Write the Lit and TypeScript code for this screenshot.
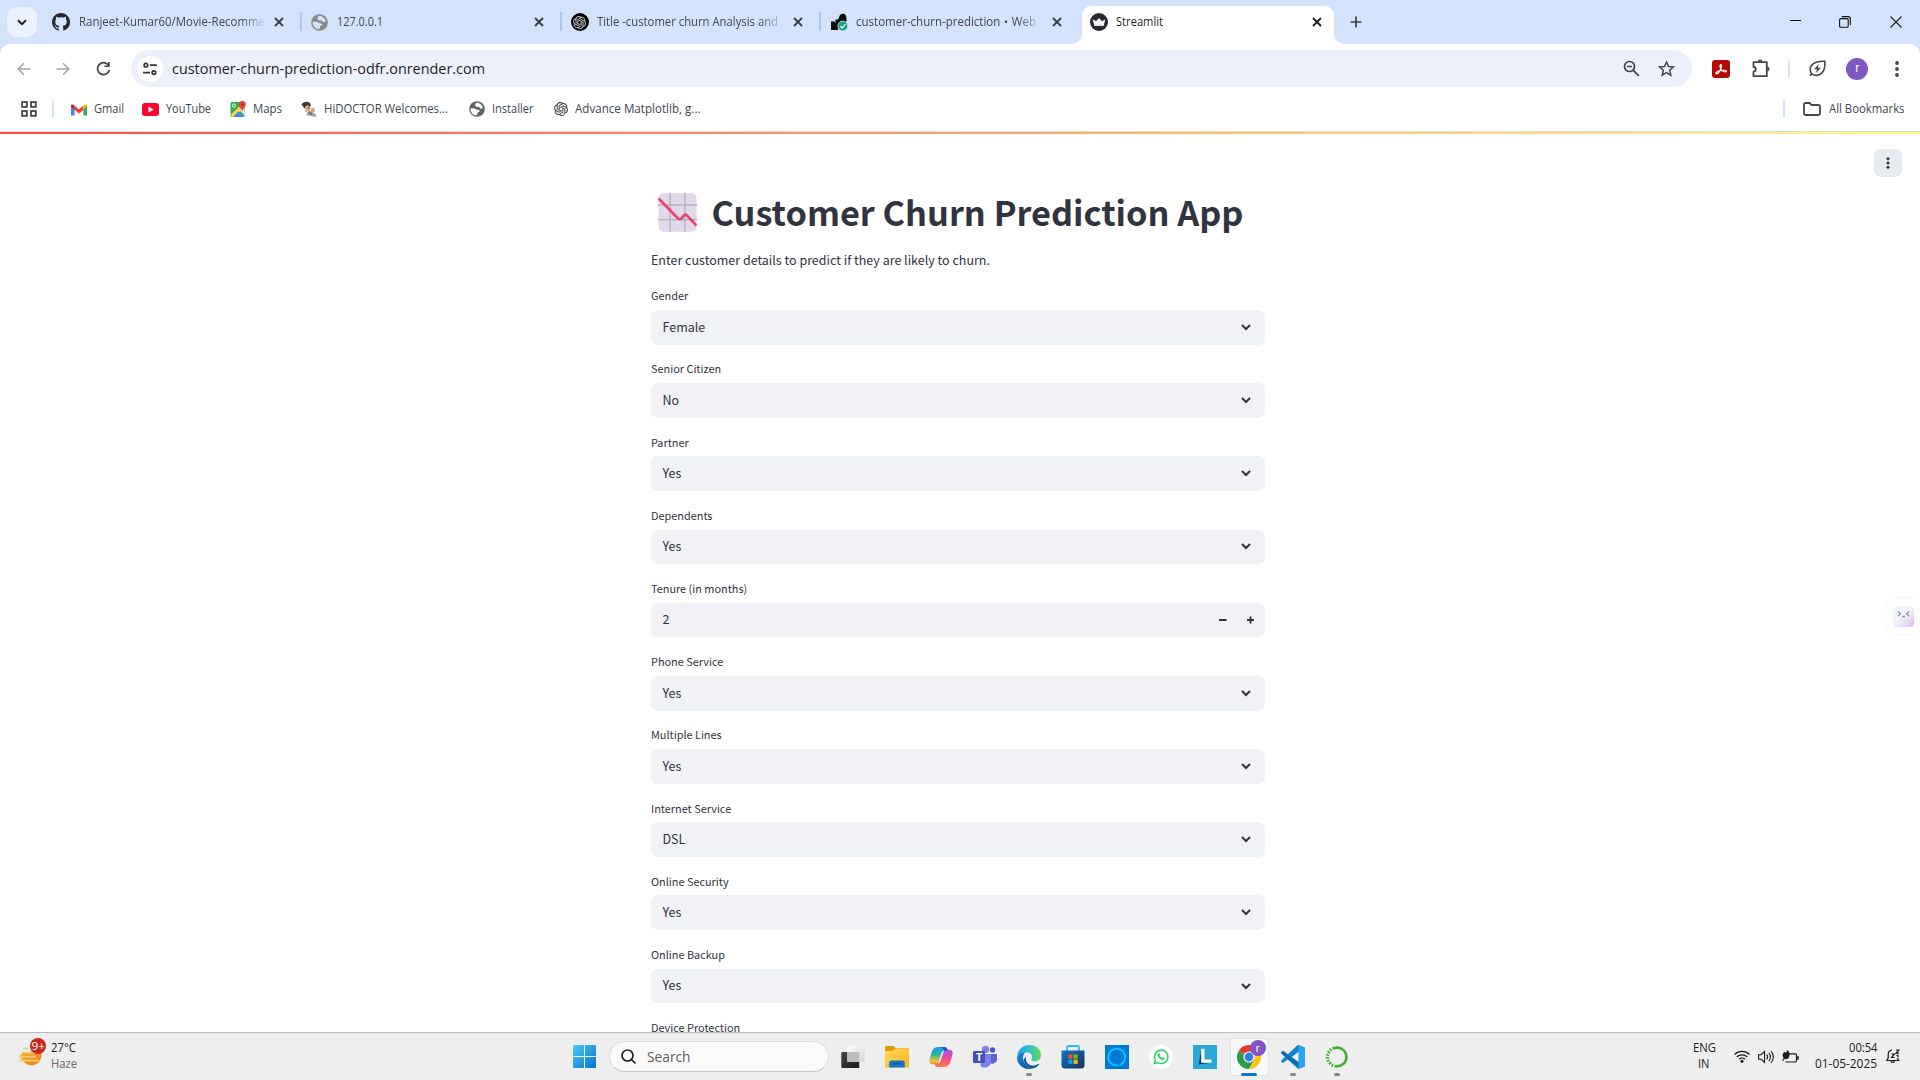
import { LitElement, html, svg, css, nothing } from "lit";
import { customElement } from "lit/decorators.js";

/** One line of interface text drawn to an exact advance width. */
const line = (text: string, width: number, cls = "ui") => html`
  <svg class="line ${cls}" width=${width} height="20" viewBox="0 0 ${width} 20">
    <text x="0" y="14" textLength=${width} lengthAdjust="spacingAndGlyphs">${text}</text>
  </svg>`;

const icon = (w: number, h: number, box: string, body: unknown, cls = "") =>
  html`<svg class="icon ${cls}" width=${w} height=${h} viewBox=${box}>${body}</svg>`;

const cross = (cls = "") =>
  icon(10, 10, "0 0 10 10", svg`<path d="M1 1l8 8M9 1L1 9" fill="none" stroke="currentColor" stroke-width="1.9"/>`, cls);

const globe = (size: number, color: string, bg: string) => icon(size, size, "0 0 18 18", svg`
  <circle cx="9" cy="9" r="8.8" fill=${color}/>
  <path d="M1.8 8.2l4.6.1 2.6 1.6 2.6.3.2 1.5-2.2 1.4-.3 2.2-1.5.9A7 7 0 0 1 1.8 8.2z" fill=${bg}/>
  <path d="M7.2 3.2c.6-1 2-1.300 3.400-1.100l3.200 2 1.700 3-.9 1.600-2.200-.4-1-1.700-2.500.2-2-1.400z" fill=${bg}/>`);

const knot = (size: number, color: string) => icon(size, size, "0 0 24 24", svg`
  <path fill=${color} stroke=${color} stroke-width=".3" d="M22.2819 9.8211a5.9847 5.9847 0 0 0-.5157-4.9108 6.0462 6.0462 0 0 0-6.5098-2.9A6.0651 6.0651 0 0 0 4.9807 4.1818a5.9847 5.9847 0 0 0-3.9977 2.9 6.0462 6.0462 0 0 0 .7427 7.0966 5.98 5.98 0 0 0 .511 4.9107 6.051 6.051 0 0 0 6.5146 2.9001A5.9847 5.9847 0 0 0 13.2599 24a6.0557 6.0557 0 0 0 5.7718-4.2058 5.9894 5.9894 0 0 0 3.9977-2.9001 6.0557 6.0557 0 0 0-.7475-7.0729zm-9.022 12.6081a4.4755 4.4755 0 0 1-2.8764-1.0408l.1419-.0804 4.7783-2.7582a.7948.7948 0 0 0 .3927-.6813v-6.7369l2.02 1.1686a.071.071 0 0 1 .038.052v5.5826a4.504 4.504 0 0 1-4.4945 4.4944zm-9.6607-4.1254a4.4708 4.4708 0 0 1-.5346-3.0137l.142.0852 4.783 2.7582a.7712.7712 0 0 0 .7806 0l5.8428-3.3685v2.3324a.0804.0804 0 0 1-.0332.0615L9.74 19.9502a4.4992 4.4992 0 0 1-6.1408-1.6464zM2.3408 7.8956a4.485 4.485 0 0 1 2.3655-1.9728V11.6a.7664.7664 0 0 0 .3879.6765l5.8144 3.3543-2.0201 1.1685a.0757.0757 0 0 1-.071 0l-4.8303-2.7865A4.504 4.504 0 0 1 2.3408 7.872zm16.5963 3.8558L13.1038 8.364 15.1192 7.2a.0757.0757 0 0 1 .071 0l4.8303 2.7913a4.4944 4.4944 0 0 1-.6765 8.1042v-5.6772a.79.79 0 0 0-.407-.667zm2.0107-3.0231l-.142-.0852-4.7735-2.7818a.7759.7759 0 0 0-.7854 0L9.409 9.2297V6.8974a.0662.0662 0 0 1 .0284-.0615l4.8303-2.7866a4.4992 4.4992 0 0 1 6.6802 4.66zM8.3065 12.863l-2.02-1.1638a.0804.0804 0 0 1-.038-.0567V6.0742a4.4992 4.4992 0 0 1 7.3757-3.4537l-.142.0805L8.704 5.459a.7948.7948 0 0 0-.3927.6813zm1.0976-2.3654l2.602-1.4998 2.6069 1.4998v2.9994l-2.5974 1.4997-2.6067-1.4997Z"/>`);

const github = icon(18, 18, "0 0 16 16", svg`<path fill="#24292f" d="M8 0C3.58 0 0 3.58 0 8c0 3.54 2.29 6.53 5.47 7.59.4.07.55-.17.55-.38 0-.19-.01-.82-.01-1.49-2.01.37-2.53-.49-2.69-.94-.09-.23-.48-.94-.82-1.13-.28-.15-.68-.52-.01-.53.63-.01 1.08.58 1.23.82.72 1.21 1.87.87 2.33.66.07-.52.28-.87.51-1.07-1.78-.2-3.64-.89-3.64-3.95 0-.87.31-1.59.82-2.15-.08-.2-.36-1.02.08-2.12 0 0 .67-.21 2.2.82.64-.18 1.32-.27 2-.27s1.36.09 2 .27c1.53-1.04 2.2-.82 2.2-.82.44 1.1.16 1.92.08 2.12.51.56.82 1.27.82 2.15 0 3.07-1.87 3.75-3.65 3.95.29.25.54.73.54 1.48 0 1.07-.01 1.93-.01 2.2 0 .21.15.46.55.38A8.01 8.01 0 0 0 16 8c0-4.42-3.58-8-8-8z"/>`);

const gpt = html`<span class="gpt">${knot(13, "#c4c4c4")}</span>`;

const render = icon(18, 18, "0 0 18 18", svg`
  <path fill="#0b0b0b" d="M13.2.8c-2.400 0-3.900 1.600-4.200 3.600-.2 1.500-1.300 2.200-2.900 2.200C3.200 6.600 1 8.800 1 11.500V17h7.200v-4.700h3.200c3.300-.2 5.300-2.700 5.200-5.900C16.500 3.200 15.600.8 13.200.8z"/>
  <path d="M.5 6h5v4h-5z" fill="#d3e3fd"/><path d="M1 8.500h4V12H1z" fill="#0b0b0b"/>
  <circle cx="12.800" cy="13" r="4.900" fill="#12a37f" stroke="#d3e3fd" stroke-width=".8"/>
  <path d="M10.400 13.200l1.800 1.800 3.200-3.800" fill="none" stroke="#fff" stroke-width="1.300"/>`);

const crown = icon(18, 18, "0 0 18 18", svg`
  <circle cx="9" cy="9" r="9" fill="#262730"/>
  <path d="M2.700 6.300l3.200 1.900L9 4.900l3.100 3.300 3.200-1.900-1.700 6.700H4.400z" fill="#fff"/>
  <path d="M5 11.200h8l-.5 1.800h-7z" fill="#ddd"/>`);

interface Tab { icon: unknown; title: string; width: number; clipped?: boolean }

const tabs: Tab[] = [
  { icon: github, title: "Ranjeet-Kumar60/Movie-Recomme", width: 186, clipped: true },
  { icon: globe(17, "#8a8a8a", "#d3e3fd"), title: "127.0.0.1", width: 46 },
  { icon: gpt, title: "Title -customer churn Analysis and", width: 181, clipped: true },
  { icon: render, title: "customer-churn-prediction・Web", width: 180, clipped: true },
];

@customElement("browser-tabs")
class BrowserTabs extends LitElement {
  static styles = css`
    :host { display: flex; height: 44px; background: #d3e3fd; color: #3c4043; align-items: stretch; }
    svg { display: block; flex: none; }
    .line { overflow: visible; }
    .ui { font: 11.7px "Open Sans", "Noto Sans CJK JP", sans-serif; fill: #41474d; }
    .search { width: 30px; height: 30px; margin: 7px 4px 0 7px; border-radius: 10px; background: #ebf2ff; display: grid; place-items: center; flex: none; }
    .tab { box-sizing: border-box; width: 259.300px; padding: 0 16px 0 11px; display: flex; align-items: center; height: 44px; flex: none; }
    .tab + .tab { background: linear-gradient(#a8c7fa, #a8c7fa) no-repeat 0 12px / 2px 19px; }
    .title { flex: 1; margin: 0 8px 0 8.500px; height: 20px; min-width: 0; }
    .clipped { -webkit-mask-image: linear-gradient(90deg, #000 162px, transparent 188px); mask-image: linear-gradient(90deg, #000 162px, transparent 188px); }
    .gpt { width: 18px; height: 18px; border-radius: 50%; background: #050505; display: grid; place-items: center; flex: none; }
    .active { position: relative; box-sizing: border-box; width: 252px; margin: 6px 0 0 4.300px; padding: 0 12.500px 6px 7.500px; border-radius: 9px 9px 0 0; background: #fff; display: flex; align-items: center; flex: none; color: #1f1f1f; }
    .active .ui { fill: #1f1f1f; }
    .active::before, .active::after { content: ""; position: absolute; bottom: 0; width: 10px; height: 10px; }
    .active::before { left: -10px; background: radial-gradient(circle at 0 0, transparent 9.500px, #fff 10px); }
    .active::after { right: -10px; background: radial-gradient(circle at 100% 0, transparent 9.500px, #fff 10px); }
    .plus { margin: 16px 0 0 16px; }
    .win { margin-left: auto; padding: 0 18.500px 0 0; display: flex; gap: 38.500px; height: 43px; align-items: center; }
  `;
  render() {
    return html`
      <div class="search">${icon(10, 7, "0 0 10 7", svg`<path d="M1 1.200l4 4 4-4" fill="none" stroke="#1f1f1f" stroke-width="2"/>`)}</div>
      ${tabs.map((t) => html`<div class="tab">${t.icon}
        <div class="title ${t.clipped ? "clipped" : ""}">${line(t.title, t.width)}</div>${cross()}</div>`)}
      <div class="active">${crown}<div class="title">${line("Streamlit", 47)}</div>${cross()}</div>
      ${icon(12, 12, "0 0 12 12", svg`<path d="M6 .5v11M.5 6h11" stroke="#3c4043" stroke-width="1.700"/>`, "plus")}
      <div class="win">
        ${icon(11, 11, "0 0 11 11", svg`<path d="M0 4.500h11" stroke="#000"/>`)}
        ${icon(12, 12, "0 0 12 12", svg`<g fill="none" stroke="#111" stroke-width="1.100"><rect x=".6" y="2.600" width="8.600" height="8.600" rx="1.300"/><path d="M2.800.6h6.200a2.300 2.300 0 0 1 2.300 2.300V9"/></g>`)}
        ${icon(12, 12, "0 0 12 12", svg`<path d="M.5.5l11 11M11.500.5l-11 11" stroke="#222" stroke-width="1.100"/>`)}
      </div>`;
  }
}

@customElement("browser-toolbar")
class BrowserToolbar extends LitElement {
  static styles = css`
    :host { display: block; background: linear-gradient(#d3e3fd, #d3e3fd) 0 0 / 100% 12px no-repeat; }
    svg { display: block; flex: none; }
    .bar { background: #fff; border-radius: 10px 10px 0 0; height: 43px; padding: 6px 20px 0 17px; display: flex; box-sizing: border-box; align-items: center; }
    .nav { display: flex; align-items: center; gap: 24.700px; }
    .reload { margin-left: 1.300px; }
    .omnibox { margin-left: 20px; width: 1561px; height: 37px; box-sizing: border-box; border-radius: 19px; background: #ebf0fa; display: flex; align-items: center; padding: 0 17px 0 6px; flex: none; }
    .info { width: 26px; height: 26px; border-radius: 50%; background: #fff; display: grid; place-items: center; margin-right: 9px; }
    .line { overflow: visible; }
    .url { font: 15.200px "Open Sans", sans-serif; fill: #1f1f1f; margin-top: 2px; }
    .zoom { margin-left: auto; }
    .star { margin-left: 18px; }
    .pdf { margin-left: 20px; }
    .ext { margin-left: 21px; }
    .sep { width: 2px; height: 18px; background: #d3e3fd; border-radius: 1px; margin-left: 18.700px; }
    .leaf { margin-left: 19px; }
    .avatar { width: 22px; height: 22px; border-radius: 50%; background: #7e57c2; margin-left: 20px; color: #fff; font: 12px/21px "Roboto", sans-serif; text-align: center; }
    .dots { margin-left: 27px; }
  `;
  render() {
    return html`<div class="bar">
      <div class="nav">
        ${icon(14, 14, "0 0 14 14", svg`<path d="M13.500 7H1.500M7 1.200L1.200 7 7 12.800" fill="none" stroke="#a5a7a9" stroke-width="1.600"/>`)}
        ${icon(14, 14, "0 0 14 14", svg`<path d="M.5 7h12M7 1.200L12.800 7 7 12.800" fill="none" stroke="#a5a7a9" stroke-width="1.600"/>`)}
        ${icon(15, 15, "0 0 15 15", svg`<path d="M12.600 4.300A6 6 0 1 0 13.400 9" fill="none" stroke="#44474a" stroke-width="1.800"/><path d="M13.700.9v5.200H8.500V4.500h3.600V.9z" fill="#44474a"/>`, "reload")}
      </div>
      <div class="omnibox">
        <div class="info">${icon(14, 14, "0 0 14 14", svg`<g fill="none" stroke="#333639" stroke-width="1.700"><circle cx="2.900" cy="3.200" r="1.800"/><path d="M6.800 3.200h7M0 10.600h7"/><circle cx="10.900" cy="10.600" r="1.800"/></g>`)}</div>
        ${line("customer-churn-prediction-odfr.onrender.com", 313, "url")}
        ${icon(17, 17, "0 0 17 17", svg`<g fill="none" stroke="#44474a" stroke-width="1.700"><circle cx="6.500" cy="6.500" r="5"/><path d="M10.300 10.300l5.600 5.600M4 6.500h5"/></g>`, "zoom")}
        ${icon(17, 17, "0 0 17 17", svg`<path d="M8.500 2l2 4.500 4.900.45-3.700 3.300 1.100 4.850-4.300-2.550-4.300 2.550 1.100-4.850L1.600 6.950l4.900-.45z" fill="none" stroke="#44474a" stroke-width="1.500"/>`, "star")}
      </div>
      ${icon(18, 18, "0 0 18 18", svg`<rect width="18" height="18" rx="3" fill="#b30b00"/><path d="M4 13.600c-.9-.8 1.500-2.300 4.200-2.900 3-.7 6.300-.7 6.200.6-.1 1.400-3.300.2-5-1.500C7.900 8.200 7.500 5 8.700 4.600c1.100-.2.9 2.700-.4 5.300-1.100 2.300-3.100 4.700-4.300 3.700z" fill="none" stroke="#fff" stroke-width="1.200"/>`, "pdf")}
      ${icon(19, 19, "0 0 19 19", svg`<path d="M2.500 3.200h13.300v14H2.500v-4.500c3 0 3-4.700 0-4.700z" fill="none" stroke="#44474a" stroke-width="1.800" stroke-linejoin="round"/><path d="M6.800 2.800a2.300 2.300 0 0 1 4.600 0zM16.200 7.800a2.300 2.300 0 0 1 0 4.600z" fill="#44474a"/>`, "ext")}
      <div class="sep"></div>
      ${icon(17, 17, "0 0 17 17", svg`<g fill="none" stroke="#44474a" stroke-width="1.600"><path d="M2.800 13.800C.8 11.500.6 7.600 2.800 5c2.700-3.200 7-4 13-3.800.4 5.300-.5 9.700-3.400 12.200-2.800 2.500-7 2.600-9.600.4zM.9 15.800l2-2"/></g><path d="M9.800 4L5 9.200h3l-1.300 4 5.300-5.400H8.800z" fill="#44474a"/>`, "leaf")}
      <div class="avatar">r</div>
      ${icon(4, 16, "0 0 4 16", svg`<g fill="#44474a"><circle cx="2" cy="2" r="1.900"/><circle cx="2" cy="8" r="1.900"/><circle cx="2" cy="14" r="1.900"/></g>`, "dots")}
    </div>`;
  }
}

const bookmarks = [
  { text: "Gmail", width: 30, icon: icon(16, 13, "0 0 16 13", svg`<path d="M0 1.500V12.500h3.600V5.500z" fill="#4285f4"/><path d="M16 1.500V12.500h-3.600V5.500z" fill="#34a853"/><path d="M3.600 2.800L8 6.300l4.400-3.500v4.300L8 10.400 3.600 7.100z" fill="#ea4335"/><path d="M12.400 2.800C13.800 1.200 16 1 16 3.300L12.400 7.100z" fill="#fbbc04"/><path d="M3.600 2.800C2.200 1.200 0 1 0 3.300L3.600 7.100z" fill="#c5221f"/>`) },
  { text: "YouTube", width: 45, icon: icon(17, 13, "0 0 17 13", svg`<rect width="17" height="13" rx="3" fill="#f03"/><path d="M6.500 3.500v6l5-3z" fill="#fff"/>`) },
  { text: "Maps", width: 29, icon: icon(16, 16, "0 0 16 16", svg`<rect x=".5" y="1" width="14" height="15" rx="1.500" fill="#34a853"/><path d="M.5 14L9 5.500l3 3L4.500 16H2z" fill="#fbd24b"/><path d="M3 16l5.300-5.600L13.500 16z" fill="#4285f4"/><path d="M9.500 9l5-1.500V14.500z" fill="#e4e6ea"/><path d="M12.300 0a3.500 3.500 0 0 1 3.500 3.500c0 2.500-3 4-3.500 7-.5-3-3.500-4.500-3.500-7A3.500 3.500 0 0 1 12.300 0z" fill="#ea4335"/><circle cx="12.300" cy="3.600" r="1.200" fill="#9d2a20"/><circle cx="3.900" cy="4.500" r="1.600" fill="none" stroke="#fff" stroke-width=".9"/>`) },
  { text: "HiDOCTOR Welcomes...", width: 124, icon: icon(16, 16, "0 0 16 16", svg`<path d="M5.500 14l1.200-4 3 1.200 4.500 1.600 1 3.200z" fill="#8e9aa5"/><path d="M3 4.500c2-1.500 5-1 6.500 1.500l-.5 4.500-4.500.5z" fill="#e6b58b"/><path d="M.5 3.500C2 .5 6.500 0 9 2l1 3-2 .5-1.500-1.500-2 1.500-1 2z" fill="#47382e"/><path d="M10 7.500l3-1 1 3.500-2.500 3-2-1z" fill="#d9a67c"/><path d="M6.700 7h2" stroke="#222"/><path d="M8.500 10.500l2 3" stroke="#3f6f8e" stroke-width="1.400"/>`) },
  { text: "Installer", width: 41.5, icon: globe(16, "#5f6368", "#fff") },
  { text: "Advance Matplotlib, g...", width: 125.5, icon: knot(14, "#444") },
];

@customElement("bookmark-bar")
class BookmarkBar extends LitElement {
  static styles = css`
    :host { display: flex; height: 45px; align-items: center; background: #fff; border-bottom: 1px solid #d9dde2; padding: 0 16px 0 20.500px; box-sizing: border-box; }
    svg { display: block; flex: none; }
    .line { overflow: visible; }
    .ui { font: 11.700px "Open Sans", sans-serif; fill: #41474d; }
    .sep { width: 2px; height: 18px; background: #d3e3fd; border-radius: 1px; margin: 0 17.300px 0 15.700px; }
    .list { display: grid; grid-template-columns: 71px 88px 71px 168px 85px auto; align-items: center; }
    .mark, .all { display: flex; align-items: center; gap: 7px; }
    .all { margin-left: auto; gap: 8px; }
    .all .sep { margin: 0 10px 0 0; }
  `;
  render() {
    return html`
      ${icon(16, 16, "0 0 16 16", svg`<g fill="none" stroke="#44474a" stroke-width="1.800"><rect x="1.100" y="1.100" width="4.800" height="4.800"/><rect x="10" y="1.100" width="4.800" height="4.800"/><rect x="1.100" y="10" width="4.800" height="4.800"/><rect x="10" y="10" width="4.800" height="4.800"/></g>`)}
      <div class="sep"></div>
      <div class="list">${bookmarks.map((b) => html`<div class="mark">${b.icon}${line(b.text, b.width)}</div>`)}</div>
      <div class="all"><div class="sep"></div>
        ${icon(18, 14, "0 0 18 14", svg`<path d="M1 2.500A1.500 1.500 0 0 1 2.500 1h4l2 2h7A1.500 1.500 0 0 1 17 4.500v7a1.500 1.500 0 0 1-1.500 1.500h-13A1.500 1.500 0 0 1 1 11.500z" fill="none" stroke="#44474a" stroke-width="1.800"/>`)}
        ${line("All Bookmarks", 75.5)}</div>`;
  }
}

const fields: { label: string; value: string; stepper?: boolean }[] = [
  { label: "Gender", value: "Female" },
  { label: "Senior Citizen", value: "No" },
  { label: "Partner", value: "Yes" },
  { label: "Dependents", value: "Yes" },
  { label: "Tenure (in months)", value: "2", stepper: true },
  { label: "Phone Service", value: "Yes" },
  { label: "Multiple Lines", value: "Yes" },
  { label: "Internet Service", value: "DSL" },
  { label: "Online Security", value: "Yes" },
  { label: "Online Backup", value: "Yes" },
  { label: "Device Protection", value: "" },
];

@customElement("churn-form")
class ChurnForm extends LitElement {
  static styles = css`
    :host { display: block; position: relative; overflow: hidden; background: #fff; color: #31333f; font-family: "Noto Sans CJK SC", sans-serif; }
    svg { display: block; flex: none; }
    .deco { height: 2px; background: linear-gradient(90deg, #ff4b4b, #fffd80); }
    .menu { position: absolute; right: 18px; top: 17px; width: 28px; height: 28px; border-radius: 7px; background: #e6eaf1; display: grid; place-items: center; }
    .column { width: 614px; margin-left: 651px; padding-top: 47.800px; }
    h1 { margin: 0; height: 58px; display: flex; align-items: center; gap: 14.500px; padding-left: 7px; font-size: 34.300px; font-weight: 700; line-height: 58px; white-space: nowrap; }
    .emoji { margin-top: 4px; }
    .intro { margin: 3.500px 0 0; height: 33px; font-size: 12.500px; line-height: 33px; }
    .form { padding-top: 9.900px; }
    .field { height: 73.200px; }
    .label { height: 23.800px; font-size: 10.900px; line-height: 18px; }
    .box { height: 34.700px; border-radius: 7px; background: #f0f2f6; display: flex; align-items: center; padding: 0 14px 0 11.500px; box-sizing: border-box; font-size: 12.500px; line-height: 18px; }
    .box span { margin-top: -1.500px; }
    .box svg { margin-left: auto; }
    .box .steps { margin-right: -2.500px; }
    .widget { position: absolute; right: 0; top: 466px; width: 34px; height: 36px; border-radius: 6px 0 0 6px; box-shadow: 0 0 2px #e8e8ec; background: #fff; display: flex; align-items: center; padding-left: 7px; box-sizing: border-box; }
    .face { width: 21px; height: 21px; border-radius: 4px; background: linear-gradient(135deg, #f1f4fa 45%, #ecdff8 70%, #d5aef0); }
  `;
  render() {
    return html`
      <div class="deco"></div>
      <div class="menu">${icon(4, 12, "0 0 4 12", svg`<g fill="#31333f"><circle cx="2" cy="1.700" r="1.500"/><circle cx="2" cy="6" r="1.500"/><circle cx="2" cy="10.300" r="1.500"/></g>`)}</div>
      <div class="column">
        <h1>${icon(39, 39, "0 0 39 39", svg`<rect x=".5" y=".3" width="38" height="38.400" rx="5" fill="#e1d8ec"/><path d="M12 0v39M27 0v39M0 12h39M0 26.700h39" stroke="#b4acbc" stroke-width="1.300"/><path d="M.6 5.500L20 25.500q1.800 1.500 3.500-.2L26.500 22q1-1 2.200.2L38.400 32.500" fill="none" stroke="#ec4069" stroke-width="2.600"/>`, "emoji")}<span>Customer Churn Prediction App</span></h1>
        <p class="intro">Enter customer details to predict if they are likely to churn.</p>
        <div class="form">${fields.map((f) => html`<div class="field">
          <div class="label">${f.label}</div>
          <div class="box"><span>${f.value}</span>${f.stepper
            ? icon(35, 8, "0 0 35 8", svg`<path d="M0 4h7.500M28 4h7M31.500.5v7" stroke="#31333f" stroke-width="1.900"/>`, "steps")
            : icon(10, 7, "0 0 10 7", svg`<path d="M1 1l4 4 4-4" fill="none" stroke="#31333f" stroke-width="2"/>`)}</div>
        </div>`)}</div>
      </div>
      <div class="widget"><div class="face">${icon(21, 21, "0 0 21 21", svg`<path d="M5 5.500l2.500 2.200L5 10M16 5.500l-2.500 2.200L16 10M9 10.500h3" fill="none" stroke="#8d9099" stroke-width="1.300"/>`)}</div></div>`;
  }
}

const grad = (id: string, a: string, b: string) => svg`<linearGradient id=${id} x1="0" y1="0" x2="1" y2="1"><stop offset="0" stop-color=${a}/><stop offset="1" stop-color=${b}/></linearGradient>`;

const apps: { body: unknown; state?: string }[] = [
  { body: svg`<defs>${grad("tv", "#fff", "#d5d5d5")}${grad("tk", "#444", "#1c1c1c")}</defs><rect x=".3" y="7" width="18" height="16" rx="1" fill="url(#tk)"/><rect x="6.300" y="1" width="17.500" height="15.800" rx="1" fill="url(#tv)"/><path d="M6.300 7h12v9.800h-12z" fill="#bdbdbd"/>` },
  { body: svg`<defs>${grad("fe", "#ffd95c", "#fbb61a")}</defs><path d="M0 2.300A1.300 1.300 0 0 1 1.300 1h7.200l2.300 2.300H24V8H0z" fill="#dd9a0c"/><path d="M0 6h7.500l3-2.500H24V22.500H0z" fill="url(#fe)"/><path d="M4.200 22.500v-5A2 2 0 0 1 6.200 15.500h11.600a2 2 0 0 1 2 2v5z" fill="#1673c7"/><path d="M8 18.600h8" stroke="#0d5298" stroke-width="1.300"/>` },
  { body: svg`<defs><linearGradient id="c1" x1="0" y1="0" x2="0" y2="1"><stop offset="0" stop-color="#1aa0f5"/><stop offset=".45" stop-color="#28b59a"/><stop offset=".8" stop-color="#e8c52c"/><stop offset="1" stop-color="#f58a35"/></linearGradient><linearGradient id="c2" x1="0" y1="0" x2="0" y2="1"><stop offset="0" stop-color="#a757e4"/><stop offset=".5" stop-color="#ea4c92"/><stop offset="1" stop-color="#fc7f3c"/></linearGradient></defs><path d="M9.500 2h6c2 0 2.600 1.500 3.200 3.800H15c-1.500 0-2.200 1-2.600 2.500l-2.700 8.200c-.6 2-1.700 2.700-3.500 2.700H3.600C.8 19.200-.2 17 .6 14.200l2.300-8C3.900 3.500 5.800 2 9.500 2z" fill="url(#c1)"/><path d="M14.500 22h-6c-2 0-2.600-1.500-3.200-3.800H9c1.500 0 2.200-1 2.600-2.500l2.700-8.200c.6-2 1.700-2.700 3.500-2.700h2.600c2.800 0 3.800 2.200 3 5l-2.300 8c-1 2.700-2.900 4.200-6.600 4.200z" fill="url(#c2)"/><path d="M12 2h3.500c2 0 2.600 1.500 3.200 3.800h-3z" fill="#1857d6"/>` },
  { body: svg`<circle cx="19.500" cy="5" r="2.700" fill="#5059c9"/><circle cx="12.500" cy="4.500" r="3.700" fill="#7b83eb"/><path d="M16 9h7a1 1 0 0 1 1 1v5a4.500 4.500 0 0 1-8 2z" fill="#5b63d0"/><path d="M7.500 9H18v7a6.300 6.300 0 0 1-10.500 5z" fill="#7b83eb"/><rect x="0" y="6" width="12" height="12" rx="1" fill="#464eb8"/><text x="3" y="16" font-size="11" font-weight="700" font-family="Open Sans" fill="#fff">T</text>` },
  { state: "run", body: svg`<defs><linearGradient id="e1"><stop offset="0" stop-color="#1b9de2"/><stop offset=".55" stop-color="#36c3c4"/><stop offset="1" stop-color="#62d94b"/></linearGradient>${grad("e2", "#1a8ad8", "#0c4a93")}</defs><path d="M.2 11C.8 4.500 6 0 12.200 0 19 0 24 4.800 24 10.300c0 3.700-2.700 6-6 6-2.700 0-4.200-1-3.400-2.200C16 11.500 14.500 7.600 9.600 7.300 5 7 1.400 8.800.2 11z" fill="url(#e1)"/><path d="M.1 12.500C.5 9 4 7.200 8.500 7.200c-1.600 1.200-2.600 3.500-2.400 6.300.2 4.200 4 8.600 8.300 10.200C6.500 25.200-.3 19.500.1 12.500z" fill="url(#e2)"/><path d="M9.200 11.200c-2 6 3.800 10.200 8.300 9.200 2-.4 3.900-1.800 4.900-1.300-1.600 2.600-4.500 4.600-8 4.600-4.300-1.600-8-5.800-7.700-9.400z" fill="#12599f"/>` },
  { body: svg`<defs>${grad("st", "#1173cb", "#1b3157")}</defs><path d="M6 6V2.300A1.300 1.300 0 0 1 7.300 1h9.400A1.300 1.300 0 0 1 18 2.300V6" fill="none" stroke="#29bdf4" stroke-width="1.800"/><path d="M.5 5.500h23V20a3.500 3.500 0 0 1-3.500 3.500H4A3.500 3.500 0 0 1 .5 20z" fill="url(#st)"/><path d="M7.300 9.500h4.200v4.200H7.300z" fill="#f25022"/><path d="M12.500 9.500h4.200v4.200h-4.200z" fill="#7fba00"/><path d="M7.300 14.700h4.200v4.200H7.300z" fill="#00a4ef"/><path d="M12.500 14.700h4.200v4.200h-4.200z" fill="#ffb900"/>` },
  { body: svg`<path d="M0 0h24v24H0z" fill="#0078d7"/><path d="M11.500 20.500A8.400 8.400 0 1 1 14.600 20" fill="none" stroke="#00caff" stroke-width="1.900"/><path d="M10 19.500l3.500 1.500" stroke="#00caff" stroke-width="1.300"/>` },
  { body: svg`<circle cx="12" cy="12" r="12" fill="#fff"/><path d="M5.300 18.700l1-3.700a6.700 6.700 0 1 1 2.500 2.600z" fill="none" stroke="#25d366" stroke-width="1.500"/><path d="M9.700 8.300c.9-.5 1.200.9 1.500 1.500l-.6 1c.5 1 1.300 1.800 2.300 2.200l.9-.8c.9.3 2 .8 1.800 1.400-.4 1.200-1.900 1.500-3.200 1-2.200-.9-3.500-2.600-3.900-4-.2-1 .3-2 1.200-2.300z" fill="#25d366"/>` },
  { body: svg`<path d="M0 0h24v24H0z" fill="#29a8d8"/><path d="M8.200 4L5.700 19.500l12.500-1.800-10-.2z" fill="#123c68"/><path d="M8.200 3.700h3.300v10.800h7v3.300H8.200z" fill="#fff"/>` },
  { state: "on", body: svg`<path d="M12 12L1.600 6A12 12 0 0 1 22.400 6z" fill="#e33b2e"/><path d="M12 12h-.1L1.600 6A12 12 0 0 0 12 24l5.200-9z" fill="#2b9d48"/><path d="M12 12V6h10.400A12 12 0 0 1 12 24l5.200-9z" fill="#fcc31e"/><path d="M12 6.500h10.600L17 9z" fill="#e33b2e"/><circle cx="12" cy="12" r="5.600" fill="#fff"/><circle cx="12" cy="12" r="4.400" fill="#3079e8"/><circle cx="21" cy="3" r="8" fill="#7e57c2"/><text x="18.800" y="6.500" font-size="11" font-family="Roboto" fill="#fff">r</text>` },
  { state: "run", body: svg`<path d="M17.500 0L24 2.800v18.400L17.500 24 7 14.300l-4.800 3.800L.2 17v-1.500l16-15z" fill="#1485cf"/><path d="M.2 7l2-1.200L17.800 18v6L.2 8.500z" fill="#0a6fb5"/><path d="M17.500 0L24 2.800v18.400L17.500 24z" fill="#28a4f2"/><path d="M17.500 7v10L10.800 12z" fill="#eee"/>` },
  { state: "run", body: svg`<path d="M9 3.200A9.300 9.300 0 1 1 9.500 20.900" fill="none" stroke="#3eb02a" stroke-width="2.600"/><path d="M9 3A9.300 9.300 0 0 0 9.500 21" fill="none" stroke="#3eb02a" stroke-width="2.800" stroke-dasharray="1.600 1.400"/><path d="M7 5.600A7.800 7.800 0 0 0 7 18.500" fill="none" stroke="#3eb02a" stroke-dasharray="1 1.800"/>` },
];

@customElement("task-bar")
class TaskBar extends LitElement {
  static styles = css`
    :host { display: flex; height: 48px; box-sizing: border-box; border-top: 1px solid #bcbcbc; background: #eee; align-items: center; }
    svg { display: block; flex: none; overflow: visible; }
    .weather { display: flex; width: 573px; padding-left: 19px; box-sizing: border-box; gap: 6.500px; align-items: center; }
    .haze { margin-bottom: 9px; }
    .two .line, .lang .line, .clock .line { margin: -2px 0; }
    .two, .lang, .clock { margin-top: -1px; }
    .two { display: flex; flex-direction: column; }
    .ui { font: 11.700px "Open Sans", sans-serif; fill: #1b1b1b; }
    .dim { font: 11.700px "Open Sans", sans-serif; fill: #666; }
    .find { font: 14.500px "Open Sans", sans-serif; fill: #5c5c5c; margin-top: 2px; }
    .search { width: 220px; height: 31px; box-sizing: border-box; margin: 0 2px 0 13px; border: 1px solid #dedede; border-bottom-color: #c4c4c4; border-radius: 16px; background: #fafafa; display: flex; align-items: center; padding-left: 11px; gap: 10.500px; }
    .apps { display: grid; grid-template-columns: repeat(12, 44px); }
    .app { position: relative; height: 44px; display: grid; place-items: center; }
    .on::before { content: ""; position: absolute; inset: 3px 2.500px; border: 1px solid #e2e2e2; border-radius: 4px; background: #f9f9f9; }
    .app svg { position: relative; }
    .run::after, .on::after { content: ""; position: absolute; bottom: 3px; left: 19px; width: 6px; height: 3px; border-radius: 2px; background: #868686; }
    .on::after { left: 14px; width: 16px; background: #0078d4; }
    .tray { margin-left: auto; padding-right: 20px; display: flex; align-items: center; }
    .lang, .clock { display: flex; flex-direction: column; align-items: center; }
    .lang { position: relative; left: -0.500px; }
    .clock { align-items: flex-end; margin-left: 16px; margin-right: 9px; }
    .sys { display: flex; gap: 8px; margin-left: 18px; align-items: center; }
  `;
  render() {
    return html`
      <div class="weather">
        ${icon(25, 28, "0 0 25 28", svg`<defs>${grad("wx", "#f9b42a", "#ee7a1b")}</defs><path d="M1 17h20.500l.5-3 .5.500A11.200 11.200 0 0 1 1 19z" fill="url(#wx)"/><circle cx="12.500" cy="17.500" r="10" fill="url(#wx)"/><path d="M0 4h12v10H0z" fill="#eee"/><path d="M4 10.700h5M4 14.700h13M0 18.700h17M0 22.700h20" stroke="#e9d27a" stroke-width="1.700"/><circle cx="19" cy="8" r="8" fill="#c42b1c"/><text x="12.500" y="12" font-size="11" font-family="Open Sans" fill="#fff" textLength="13.500" lengthAdjust="spacingAndGlyphs">9+</text>`, "haze")}
        <div class="two">${line("27°C", 25)}${line("Haze", 26, "dim")}</div>
      </div>
      ${icon(23, 23, "0 0 23 23", svg`<defs>${grad("w", "#4ccaf8", "#0572d0")}</defs><path d="M0 1a1 1 0 0 1 1-1h10v11H0zM12 0h10a1 1 0 0 1 1 1v10H12zM0 12h11v11H1a1 1 0 0 1-1-1zM12 12h11v10a1 1 0 0 1-1 1H12z" fill="url(#w)"/>`)}
      <div class="search">
        ${icon(15, 15, "0 0 15 15", svg`<g fill="none" stroke="#222" stroke-width="1.700"><circle cx="6.500" cy="6.500" r="5.500"/><path d="M10.500 10.500l4 4"/></g>`)}
        ${line("Search", 43.5, "find")}
      </div>
      <div class="apps">${apps.map((a) => html`<div class="app ${a.state ?? ""}">${icon(24, 24, "0 0 24 24", a.body ?? nothing)}</div>`)}</div>
      <div class="tray">
        <div class="lang">${line("ENG", 23)}${line("IN", 11.5)}</div>
        <div class="sys">
          ${icon(16, 13, "0 0 16 13", svg`<g fill="none" stroke="#1b1b1b" stroke-width="1.200"><path d="M.5 4.500a10.600 10.600 0 0 1 15 0"/><path d="M2.700 7a7.500 7.500 0 0 1 10.600 0"/><path d="M5 9.300a4.300 4.300 0 0 1 6 0"/></g><circle cx="8" cy="11.300" r="1.500" fill="#1b1b1b"/>`)}
          ${icon(16, 14, "0 0 16 14", svg`<g fill="none" stroke="#1b1b1b" stroke-width="1.100"><path d="M.6 4.700h2.500L6.600 1.500v11L3.100 9.300H.6z"/><path d="M8.700 4.700a3.500 3.500 0 0 1 0 4.600M10.800 2.900a6 6 0 0 1 0 8.200M13 1.200a8.500 8.500 0 0 1 0 11.600"/></g>`)}
          ${icon(17, 14, "0 0 17 14", svg`<path d="M7 3.800h6a1.500 1.500 0 0 1 1.500 1.500v5.200a1.500 1.500 0 0 1-1.500 1.500H3.500" fill="none" stroke="#1b1b1b" stroke-width="1.200"/><path d="M15.200 6h1.500v3.800h-1.500z" fill="#1b1b1b"/><path d="M5.500 0c2 1.500 3 5.500.8 8.200-.8 1-2.500 1.200-3.500.6L1 11H0l1.600-3C-.3 5.500 1 2.500 3 2L4 3z" fill="#1b1b1b"/>`)}
        </div>
        <div class="clock">${line("00:54", 28.5)}${line("01-05-2025", 62)}</div>
        ${icon(14, 15, "0 0 14 15", svg`<g fill="none" stroke="#1b1b1b" stroke-width="1.200"><path d="M6 1.200C3.500 1.400 2.200 3.200 2.200 5.500v3.500L.8 11.500h11.900L11.300 9M5 12.200a1.900 1.900 0 0 0 3.500 0M5.500 5h3l-3 3.500h3M10 1h3l-3 3.200h3M10.500 6.300h1.500v2"/></g>`)}
      </div>`;
  }
}

@customElement("app-root")
class AppRoot extends LitElement {
  static styles = css`
    :host { display: flex; flex-direction: column; width: 1920px; height: 1080px; overflow: hidden; background: #fff; }
    browser-tabs, browser-toolbar, bookmark-bar, task-bar { flex: none; }
    churn-form { flex: 1; min-height: 0; }
  `;
  render() {
    return html`
      <browser-tabs></browser-tabs>
      <browser-toolbar></browser-toolbar>
      <bookmark-bar></bookmark-bar>
      <churn-form></churn-form>
      <task-bar></task-bar>`;
  }
}
